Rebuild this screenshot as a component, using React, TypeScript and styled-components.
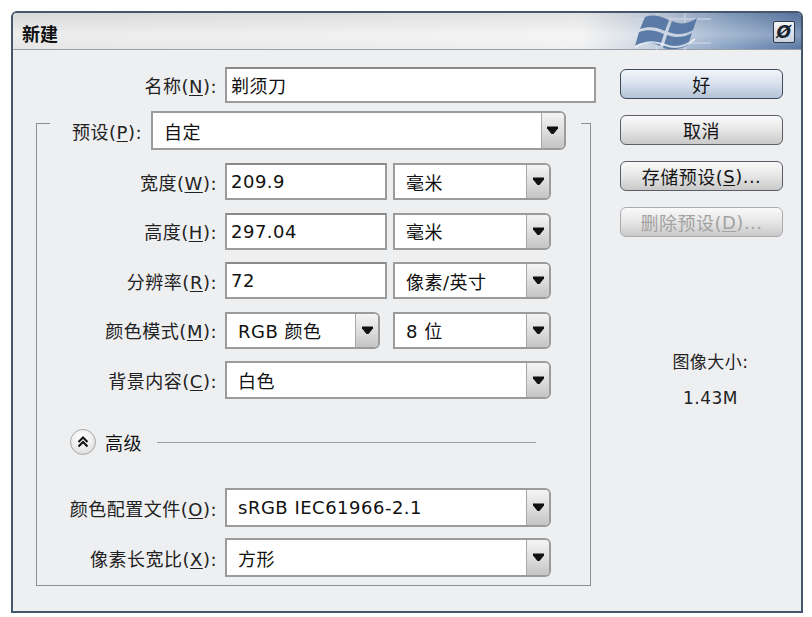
import styled, { createGlobalStyle } from "styled-components";

const GlobalStyle = createGlobalStyle`
  html, body {
    margin: 0;
    padding: 0;
    background: #ffffff;
  }
  body {
    font-family: "DejaVu Sans", "Noto Sans CJK SC", sans-serif;
  }
  * { box-sizing: border-box; }
`;

const Window = styled.div`
  margin: 11px 0 0 11px;
  width: 792px;
  height: 602px;
  border: 2px solid #46566c;
  border-radius: 6px 6px 0 0;
  background: #eeeff1;
  display: flex;
  flex-direction: column;
  overflow: hidden;
  font-size: 18px;
  letter-spacing: 0.5px;
  color: #111;
`;

const TitleBar = styled.div`
  height: 37px;
  flex: none;
  display: flex;
  align-items: center;
  padding: 4px 6px 0 9px;
  border-bottom: 1px solid #9a9ea6;
  background:
    linear-gradient(180deg, rgba(0, 0, 0, 0.06) 0%, rgba(255, 255, 255, 0.25) 60%, rgba(255, 255, 255, 0) 100%),
    linear-gradient(90deg, #e6e6e6 0%, #f1f1f1 72%, #c3cfdf 82%, #8ba4c5 90%, #5877a3 100%);
`;

const Title = styled.div`
  font-weight: bold;
  font-size: 18px;
  letter-spacing: 0;
  flex: 1;
`;

const Logo = styled.svg`
  width: 76px;
  height: 37px;
  margin-right: 62px;
  margin-top: -4px;
  align-self: flex-end;
  margin-bottom: -1px;
`;

const CloseButton = styled.div`
  width: 22px;
  height: 22px;
  border: 1px solid #2f3a48;
  border-radius: 2px;
  background: linear-gradient(180deg, #f2f4f7 0%, #c9d2de 100%);
  display: flex;
  align-items: center;
  justify-content: center;
  font-weight: bold;
  font-style: italic;
  font-size: 17px;
  color: #1c2430;
  margin-bottom: 3px;
`;

const Body = styled.div`
  flex: 1;
  display: flex;
`;

const FormColumn = styled.div`
  width: 587px;
  padding-top: 17px;
  display: flex;
  flex-direction: column;
`;

const SideColumn = styled.div`
  flex: 1;
  padding: 19px 0 0 20px;
  display: flex;
  flex-direction: column;
`;

const Row = styled.div<{ $h?: number; $mt?: number; $label?: number }>`
  display: grid;
  grid-template-columns: ${(p) => p.$label ?? 180}px auto auto;
  justify-content: start;
  column-gap: 8px;
  align-items: center;
  height: ${(p) => p.$h ?? 37}px;
  margin-top: ${(p) => p.$mt ?? 0}px;
`;

const Label = styled.label`
  text-align: right;
  white-space: nowrap;
  color: #222;
`;

const U = styled.span`
  text-decoration: underline;
  text-underline-offset: 2px;
`;

const Input = styled.div<{ $w: number }>`
  width: ${(p) => p.$w}px;
  height: 100%;
  border: 2px solid #9b9b9b;
  border-top-color: #8a8a8a;
  background: #fff;
  padding: 0 4px;
  display: flex;
  align-items: center;
  white-space: nowrap;
`;

const Select = styled.div<{ $w: number }>`
  width: ${(p) => p.$w}px;
  height: 100%;
  border: 2px solid #9b9b9b;
  border-radius: 0 6px 6px 0;
  background: #fff;
  display: flex;
  align-items: stretch;
  overflow: hidden;
`;

const SelectValue = styled.div`
  flex: 1;
  padding-left: 11px;
  display: flex;
  align-items: center;
  white-space: nowrap;
`;

const DropButton = styled.div`
  width: 23px;
  flex: none;
  border-left: 1px solid #a8a8a8;
  background: linear-gradient(180deg, #f4f4f4 0%, #dcdcdc 55%, #c4c4c4 100%);
  display: flex;
  align-items: center;
  justify-content: center;
`;

const Fields = styled.div<{ $gap?: number }>`
  display: flex;
  gap: ${(p) => p.$gap ?? 6}px;
  height: 100%;
`;

const Group = styled.div`
  margin: 20px 0 0 23px;
  width: 555px;
  border: 1px solid #8e8e8e;
  padding-bottom: 8px;
  display: flex;
  flex-direction: column;
`;

const Legend = styled.div`
  margin: -13px 9px 0 13px;
  height: 39px;
  background: #eeeff1;
  padding: 0 12px 0 22px;
  display: flex;
  align-items: center;
  gap: 9px;
`;

const Rows = styled.div`
  margin-top: 13px;
  display: flex;
  flex-direction: column;
  gap: 12.5px;
`;

const AdvancedRow = styled.div`
  margin: 29px 54px 0 33px;
  height: 28px;
  display: flex;
  align-items: center;
  gap: 9px;
`;

const RoundToggle = styled.div`
  width: 26px;
  height: 26px;
  border-radius: 50%;
  border: 1px solid #a9a9a9;
  background: radial-gradient(circle at 45% 35%, #ffffff 0%, #f1f1f1 45%, #cfcfcf 100%);
  display: flex;
  align-items: center;
  justify-content: center;
`;

const Rule = styled.div`
  flex: 1;
  height: 1px;
  background: #9c9c9c;
  margin-left: 6px;
`;

const Button = styled.div<{ $primary?: boolean; $disabled?: boolean }>`
  width: 163px;
  height: 30px;
  border-radius: 6px;
  border: 1.5px solid ${(p) => (p.$disabled ? "#a9abae" : p.$primary ? "#3d4a5c" : "#5a5e66")};
  background: ${(p) =>
    p.$primary
      ? "linear-gradient(180deg, #f3f6fa 0%, #d7e0ec 50%, #b3c2d6 100%)"
      : "linear-gradient(180deg, #fafafa 0%, #e6e6e6 50%, #c9c9c9 100%)"};
  color: ${(p) => (p.$disabled ? "#a2a2a2" : "#151515")};
  display: flex;
  align-items: center;
  justify-content: center;
  white-space: nowrap;
  & + & {
    margin-top: 16px;
  }
`;

const Info = styled.div`
  margin-top: 115px;
  display: flex;
  flex-direction: column;
  align-items: center;
  gap: 16px;
  line-height: 20px;
  font-size: 17px;
  color: #222;
`;

const Arrow = () => (
  <svg width="11" height="9" viewBox="0 0 11 9">
    <path d="M0 0.5 H11 V2.5 L6.5 8 H4.5 L0 2.5 Z" fill="#111" />
  </svg>
);

const Drop = ({ w, value }: { w: number; value: string }) => (
  <Select $w={w}>
    <SelectValue>{value}</SelectValue>
    <DropButton>
      <Arrow />
    </DropButton>
  </Select>
);

export default function App() {
  return (
    <>
      <GlobalStyle />
      <Window>
        <TitleBar>
          <Title>新建</Title>
          <Logo viewBox="0 0 76 37">
            <g stroke="#d3dceb" strokeWidth="1.5" opacity="0.7">
              <path d="M0 6 H76 M0 30 H76 M22 0 V37 M50 0 V37" />
            </g>
            <g fill="#4f72a0" opacity="0.9">
              <path d="M10 4 C18 1 26 3 34 7 L30 18 C22 14 14 13 5 16 Z" />
              <path d="M37 8 C45 12 54 11 62 5 L58 17 C50 22 41 22 33 19 Z" />
              <path d="M4 19 C12 16 21 17 29 21 L25 33 C17 29 8 29 0 33 Z" />
              <path d="M32 22 C40 25 49 25 57 20 L53 32 C45 37 36 37 28 35 Z" />
            </g>
            <path d="M0 34 C10 28 20 28 30 32 C40 36 50 34 60 26" stroke="#eef2f8" strokeWidth="2" fill="none" opacity="0.8" />
          </Logo>
          <CloseButton>Ø</CloseButton>
        </TitleBar>
        <Body>
          <FormColumn>
            <Row $h={36} $label={204}>
              <Label>
                名称(<U>N</U>):
              </Label>
              <Input $w={371}>剃须刀</Input>
            </Row>
            <Group>
              <Legend>
                <Label>
                  预设(<U>P</U>):
                </Label>
                <Drop w={415} value="自定" />
              </Legend>
              <Rows>
                <Row>
                  <Label>
                    宽度(<U>W</U>):
                  </Label>
                  <Fields>
                    <Input $w={162}>209.9</Input>
                    <Drop w={158} value="毫米" />
                  </Fields>
                </Row>
                <Row>
                  <Label>
                    高度(<U>H</U>):
                  </Label>
                  <Fields>
                    <Input $w={162}>297.04</Input>
                    <Drop w={158} value="毫米" />
                  </Fields>
                </Row>
                <Row>
                  <Label>
                    分辨率(<U>R</U>):
                  </Label>
                  <Fields>
                    <Input $w={162}>72</Input>
                    <Drop w={158} value="像素/英寸" />
                  </Fields>
                </Row>
                <Row>
                  <Label>
                    颜色模式(<U>M</U>):
                  </Label>
                  <Fields $gap={13}>
                    <Drop w={155} value="RGB 颜色" />
                    <Drop w={158} value="8 位" />
                  </Fields>
                </Row>
                <Row $h={38}>
                  <Label>
                    背景内容(<U>C</U>):
                  </Label>
                  <Drop w={326} value="白色" />
                </Row>
              </Rows>
              <AdvancedRow>
                <RoundToggle>
                  <svg width="12" height="12" viewBox="0 0 12 12">
                    <path
                      d="M1.5 6 L6 1.5 L10.5 6 M1.5 10.5 L6 6 L10.5 10.5"
                      fill="none"
                      stroke="#111"
                      strokeWidth="2"
                    />
                  </svg>
                </RoundToggle>
                <span>高级</span>
                <Rule />
              </AdvancedRow>
              <Row $h={39} $mt={32}>
                <Label>
                  颜色配置文件(<U>O</U>):
                </Label>
                <Drop w={326} value="sRGB IEC61966-2.1" />
              </Row>
              <Row $h={39} $mt={11}>
                <Label>
                  像素长宽比(<U>X</U>):
                </Label>
                <Drop w={326} value="方形" />
              </Row>
            </Group>
          </FormColumn>
          <SideColumn>
            <Button $primary>好</Button>
            <Button>取消</Button>
            <Button>
              存储预设(<U>S</U>)...
            </Button>
            <Button $disabled>
              删除预设(<U>D</U>)...
            </Button>
            <Info>
              <span>图像大小:</span>
              <span>1.43M</span>
            </Info>
          </SideColumn>
        </Body>
      </Window>
    </>
  );
}
